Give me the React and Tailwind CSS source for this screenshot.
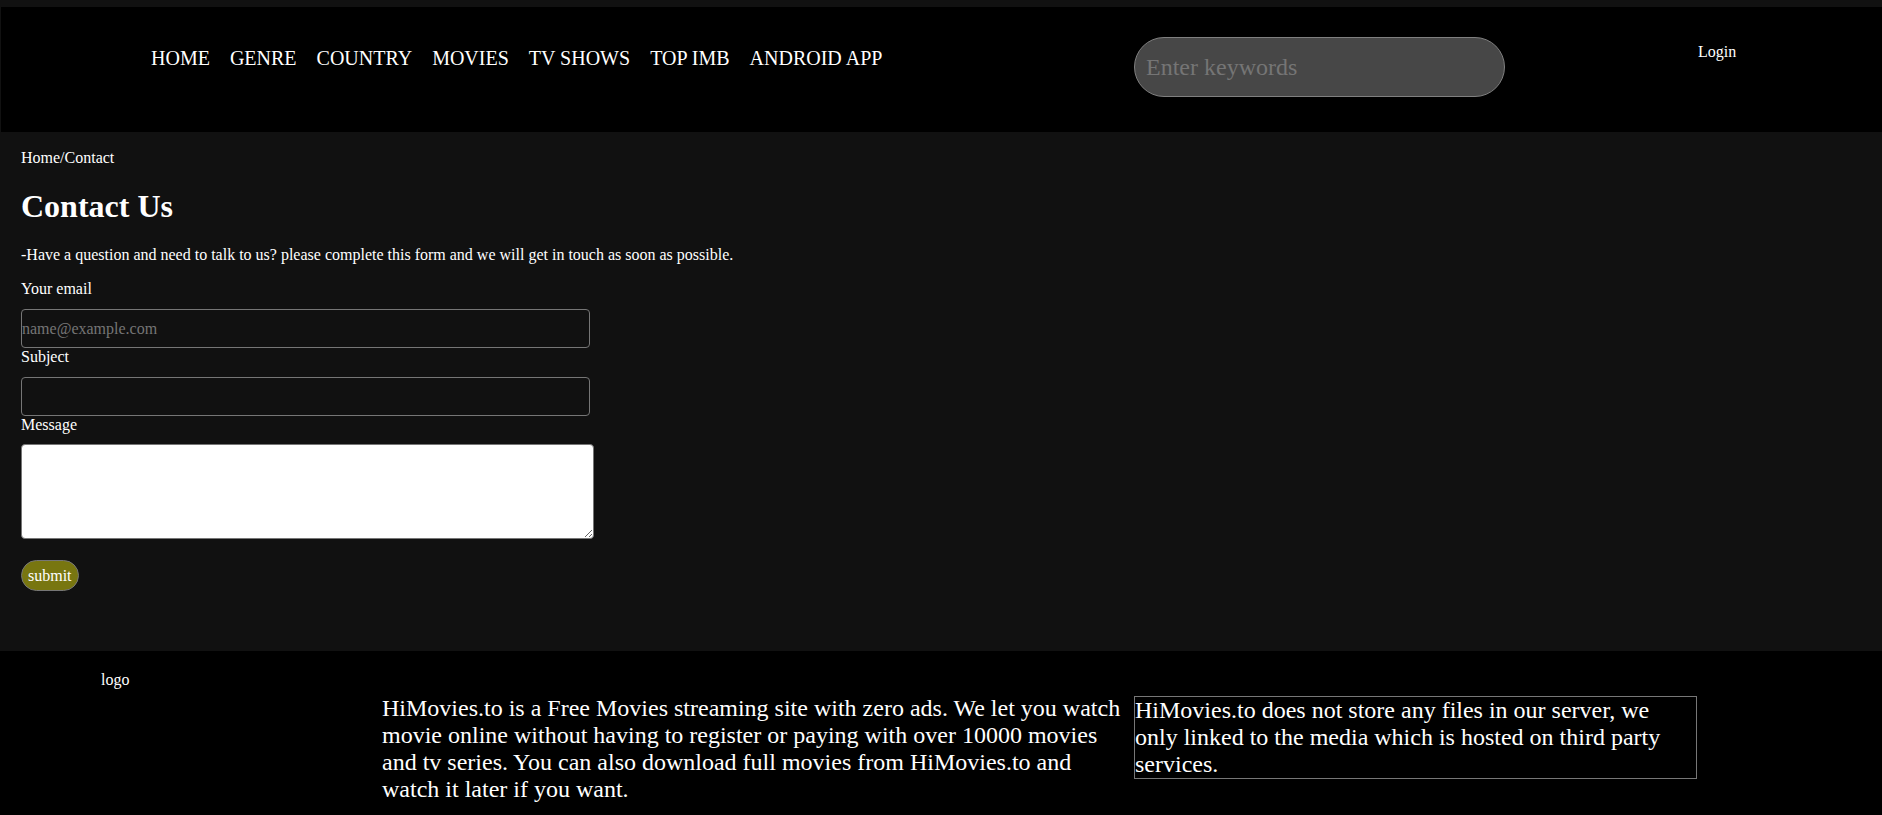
const NAV_ITEMS = ['HOME', 'GENRE', 'COUNTRY', 'MOVIES', 'TV SHOWS', 'TOP IMB', 'ANDROID APP'];

function Header() {
  return (
    <header className="ml-px flex h-[125px] items-start bg-black pl-[150px]">
      <nav className="w-[983px] pt-[40px]">
        <ul className="flex gap-[20px] text-[20px] leading-[normal]">
          {NAV_ITEMS.map((item) => (
            <li key={item}>
              <a href="#" className="text-white">{item}</a>
            </li>
          ))}
        </ul>
      </nav>
      <input
        type="text"
        placeholder="Enter keywords"
        className="mt-[30px] h-[60px] w-[371px] rounded-full border border-[#808080] bg-[#474747] pl-[11px] text-[24px] text-white outline-none placeholder:text-[#757575]"
      />
      <a href="#" className="ml-[193px] mt-[36px] text-[16px] leading-[normal] text-white">
        Login
      </a>
    </header>
  );
}

function ContactForm() {
  return (
    <main className="px-[21px] pt-[17px] pb-[60px] text-[16px] leading-[normal]">
      <div>Home/Contact</div>
      <h1 className="my-[21px] text-[32px] font-bold leading-[normal]">Contact Us</h1>
      <p className="mb-[16px]">
        -Have a question and need to talk to us? please complete this form and we will get in touch as soon as possible.
      </p>
      <form onSubmit={(e) => e.preventDefault()}>
        <label className="block">Your email</label>
        <input
          type="email"
          placeholder="name@example.com"
          className="mt-[11px] block h-[39px] w-[569px] rounded-[4px] border border-[#767676] bg-transparent text-[16px] text-white outline-none placeholder:text-[#757575]"
        />
        <label className="block">Subject</label>
        <input
          type="text"
          className="mt-[11px] block h-[39px] w-[569px] rounded-[4px] border border-[#767676] bg-transparent text-[16px] text-white outline-none"
        />
        <label className="block">Message</label>
        <textarea className="mt-[10px] block h-[95px] w-[573px] rounded-[4px] border border-[#767676] bg-white text-black outline-none" />
        <button
          type="submit"
          className="mt-[21px] h-[31px] rounded-full border border-[#767676] bg-[#787610] px-[6px] text-[16px] text-white"
        >
          submit
        </button>
      </form>
    </main>
  );
}

function Footer() {
  return (
    <footer className="flex items-start bg-black pb-[40px] pl-[101px] pt-[20px] leading-[normal]">
      <div className="w-[281px] text-[16px]">logo</div>
      <p className="mt-[24px] w-[752px] text-[24px]">
        HiMovies.to is a Free Movies streaming site with zero ads. We let you watch movie online without having to register or paying with over 10000 movies and tv series. You can also download full movies from HiMovies.to and watch it later if you want.
      </p>
      <p className="mt-[25px] w-[563px] border border-[#777] text-[24px]">
        HiMovies.to does not store any files in our server, we only linked to the media which is hosted on third party services.
      </p>
    </footer>
  );
}

export default function App() {
  return (
    <div className="min-h-screen bg-[#111] pt-[7px] font-['Liberation_Serif',serif] text-white">
      <Header />
      <ContactForm />
      <Footer />
    </div>
  );
}
